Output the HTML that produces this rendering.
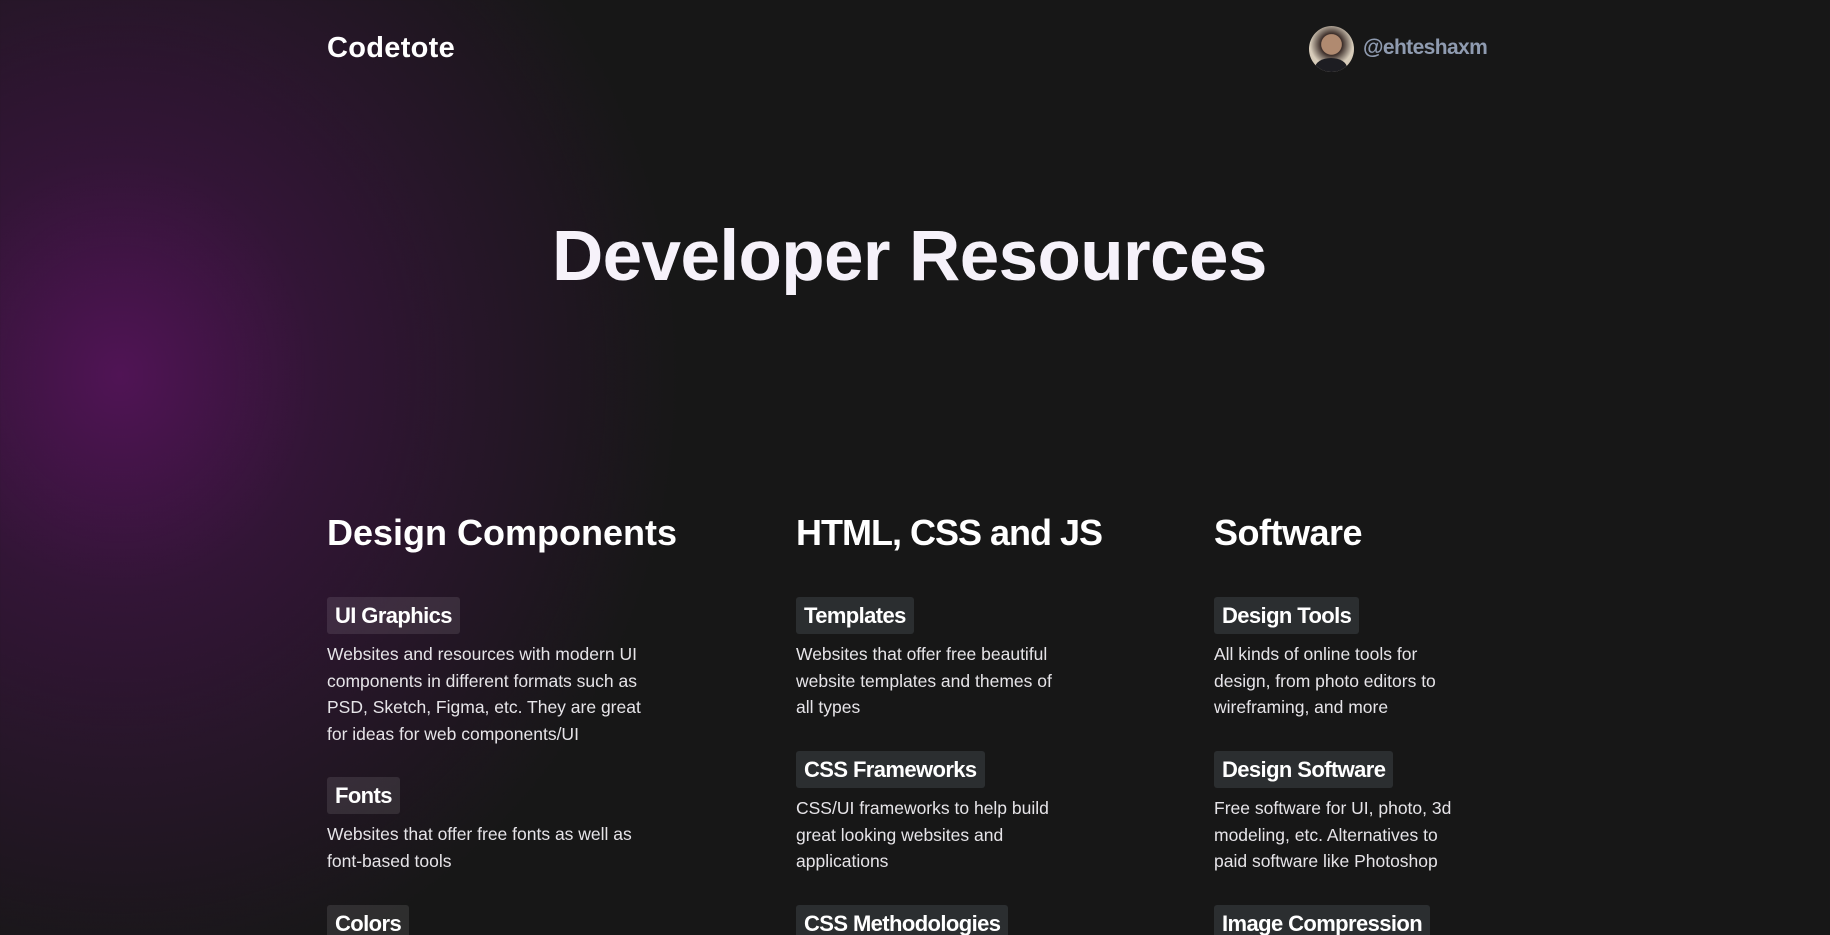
<!DOCTYPE html>
<html><head><meta charset="utf-8"><style>
*{margin:0;padding:0;box-sizing:border-box}
html,body{width:1830px;height:935px;overflow:hidden}
body{background:#171717;font-family:"Liberation Sans",sans-serif;color:#fff;position:relative;
background-image:radial-gradient(ellipse 560px 620px at 120px 375px,rgba(80,20,85,1) 0%,rgba(60,20,65,.75) 35%,rgba(23,23,23,0) 100%);}
.a{position:absolute;white-space:nowrap}
.logo{left:327px;top:32px;font-size:29px;font-weight:bold;letter-spacing:0.3px}
.av{left:1309px;top:26px;width:45px;height:46px;border-radius:50%;background:radial-gradient(circle at 50% 40%,#b08a70 0 28%,#3a2c28 30%,#d8cdbb 60%,#cfc3b0 100%);overflow:hidden}
.av:after{content:"";position:absolute;left:6px;top:32px;width:32px;height:20px;border-radius:50%;background:#1d1d22}
.h{left:1363px;top:36px;font-size:21px;font-weight:bold;color:#8f9bb0;letter-spacing:-0.6px}
.t{left:552px;top:216px;font-size:71px;font-weight:bold;letter-spacing:-0.6px;color:#f6f2fa}
.ch{font-size:36px;font-weight:bold;letter-spacing:-0.5px;top:512px}
.b{position:absolute;height:37px;padding:0 8px;line-height:37px;font-size:22px;font-weight:bold;background:rgba(255,255,255,.1);border-radius:3px;white-space:nowrap;color:#fff;letter-spacing:-0.6px}
.b2{background:#2b2e30}
.d{position:absolute;font-size:17.5px;line-height:26.5px;color:#e6e4e8}
</style></head><body>
<div class="a logo">Codetote</div>
<div class="a av"></div>
<div class="a h">@ehteshaxm</div>
<div class="a t">Developer Resources</div>

<div class="a ch" style="left:327px;letter-spacing:0">Design Components</div>
<div class="a ch" style="left:796px;letter-spacing:-1px">HTML, CSS and JS</div>
<div class="a ch" style="left:1214px">Software</div>

<div class="b" style="left:327px;top:597px">UI Graphics</div>
<div class="d" style="left:327px;top:641px;width:330px">Websites and resources with modern UI components in different formats such as PSD, Sketch, Figma, etc. They are great for ideas for web components/UI</div>
<div class="b" style="left:327px;top:777px">Fonts</div>
<div class="d" style="left:327px;top:821px;width:330px">Websites that offer free fonts as well as font-based tools</div>
<div class="b" style="left:327px;top:905px">Colors</div>

<div class="b b2" style="left:796px;top:597px">Templates</div>
<div class="d" style="left:796px;top:641px;width:270px">Websites that offer free beautiful website templates and themes of all types</div>
<div class="b b2" style="left:796px;top:751px">CSS Frameworks</div>
<div class="d" style="left:796px;top:795px;width:270px">CSS/UI frameworks to help build great looking websites and applications</div>
<div class="b b2" style="left:796px;top:905px">CSS Methodologies</div>

<div class="b b2" style="left:1214px;top:597px">Design Tools</div>
<div class="d" style="left:1214px;top:641px;width:255px">All kinds of online tools for design, from photo editors to wireframing, and more</div>
<div class="b b2" style="left:1214px;top:751px">Design Software</div>
<div class="d" style="left:1214px;top:795px;width:255px">Free software for UI, photo, 3d modeling, etc. Alternatives to paid software like Photoshop</div>
<div class="b b2" style="left:1214px;top:905px">Image Compression</div>
</body></html>
